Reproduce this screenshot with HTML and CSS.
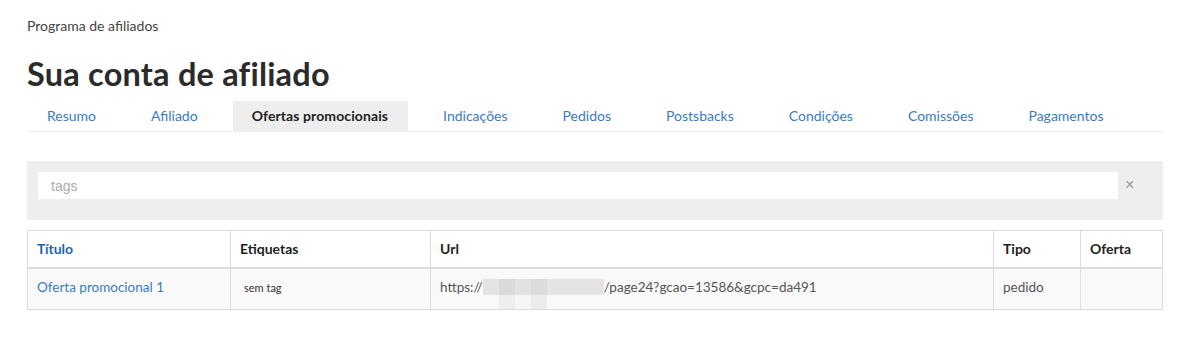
FILE: index.html
```html
<!DOCTYPE html>
<html lang="pt">
<head>
    <meta charset="UTF-8">
    <meta name="viewport" content="width=device-width, initial-scale=1.0">
    <title>Sua conta de afiliado</title>
    <link rel="stylesheet" href="styles.css">
</head>
<body>
    <div class="container">
        <p class="breadcrumb">Programa de afiliados</p>
        <h1>Sua conta de afiliado</h1>

        <ul class="tabs">
            <li><a href="#">Resumo</a></li>
            <li><a href="#">Afiliado</a></li>
            <li class="active"><a href="#">Ofertas promocionais</a></li>
            <li><a href="#">Indicações</a></li>
            <li><a href="#">Pedidos</a></li>
            <li><a href="#">Postsbacks</a></li>
            <li><a href="#">Condições</a></li>
            <li><a href="#">Comissões</a></li>
            <li><a href="#">Pagamentos</a></li>
        </ul>

        <div class="filter">
            <input type="text" class="tags-input" placeholder="tags">
            <span class="clear">&times;</span>
        </div>

        <table class="offers">
            <thead>
                <tr>
                    <th class="col-title"><a href="#">Título</a></th>
                    <th class="col-tags">Etiquetas</th>
                    <th class="col-url">Url</th>
                    <th class="col-type">Tipo</th>
                    <th class="col-offer">Oferta</th>
                </tr>
            </thead>
            <tbody>
                <tr>
                    <td><a href="#">Oferta promocional 1</a></td>
                    <td><span class="tag">sem tag</span></td>
                    <td>https://<span class="blurred"></span>/page24?gcao=13586&amp;gcpc=da491</td>
                    <td>pedido</td>
                    <td></td>
                </tr>
            </tbody>
        </table>
    </div>
</body>
</html>
```
FILE: styles.css
```css
* {
    margin: 0;
    padding: 0;
    box-sizing: border-box;
}
body {
    font-family: 'Lato', 'Liberation Sans', sans-serif;
    background-color: #fff;
    color: #333;
    font-size: 14px;
}
a {
    color: #3a7bbf;
    text-decoration: none;
}
.container {
    width: 1136px;
    margin-left: 27px;
    padding-top: 17px;
}
.breadcrumb {
    font-size: 14px;
    color: #444;
    line-height: 18px;
}
h1 {
    font-size: 32.5px;
    font-weight: 700;
    color: #2b2b2b;
    margin-top: 20px;
    line-height: 38px;
    letter-spacing: 0.2px;
}
.tabs {
    list-style: none;
    display: flex;
    gap: 15px;
    margin-top: 8px;
    border-bottom: 1px solid #eee;
}
.tabs li a {
    display: block;
    padding: 0 20px;
    line-height: 30px;
    font-size: 14px;
}
.tabs li.active a {
    background-color: #eee;
    color: #222;
    font-weight: 700;
    padding: 0 20px 0 19px;
    letter-spacing: 0.1px;
}
.filter {
    margin-top: 29px;
    background-color: #eee;
    height: 59px;
    padding: 11px 11px;
    display: flex;
    align-items: flex-start;
}
.tags-input {
    width: 1080px;
    height: 27px;
    border: none;
    outline: none;
    background: #fff;
    padding: 0 13px;
    font-family: 'Liberation Sans', Arial, sans-serif;
    font-size: 14px;
    color: #555;
}
.tags-input::placeholder {
    color: #aaa;
}
.clear {
    margin-left: 7px;
    color: #999;
    font-size: 16px;
    line-height: 25px;
    font-family: 'Liberation Sans', Arial, sans-serif;
}
.offers {
    margin-top: 10px;
    width: 100%;
    border-collapse: collapse;
    border: 1px solid #ddd;
}
.offers th, .offers td {
    border: 1px solid #ddd;
    text-align: left;
    padding: 0 9px;
    vertical-align: middle;
}
.offers th {
    height: 37px;
    font-weight: 700;
    color: #222;
    border-bottom-width: 2px;
}
.offers th a {
    color: #1e64b0;
}
.offers td {
    height: 42px;
    padding-bottom: 4px;
    background-color: #f9f9f9;
    color: #555;
    font-size: 13.5px;
}
.col-title { width: 203px; }
.col-tags { width: 200px; }
.col-url { width: 563px; }
.col-type { width: 87px; }
.tag {
    font-size: 11px;
    color: #333;
    padding-left: 4px;
}
.blurred {
    display: inline-block;
    width: 121px;
    height: 16px;
    vertical-align: -3px;
    background: linear-gradient(90deg, #e4e4e4 0 16px, #dadada 16px 32px, #e2e2e2 32px 48px, #dcdcdc 48px 64px, #e4e4e4 64px 121px);
    position: relative;
}
.blurred::after {
    content: "";
    position: absolute;
    left: 16px;
    top: 16px;
    width: 48px;
    height: 14px;
    background: linear-gradient(90deg, #eeeeee 0 16px, #f6f6f6 16px 32px, #ececec 32px 48px);
}
```
